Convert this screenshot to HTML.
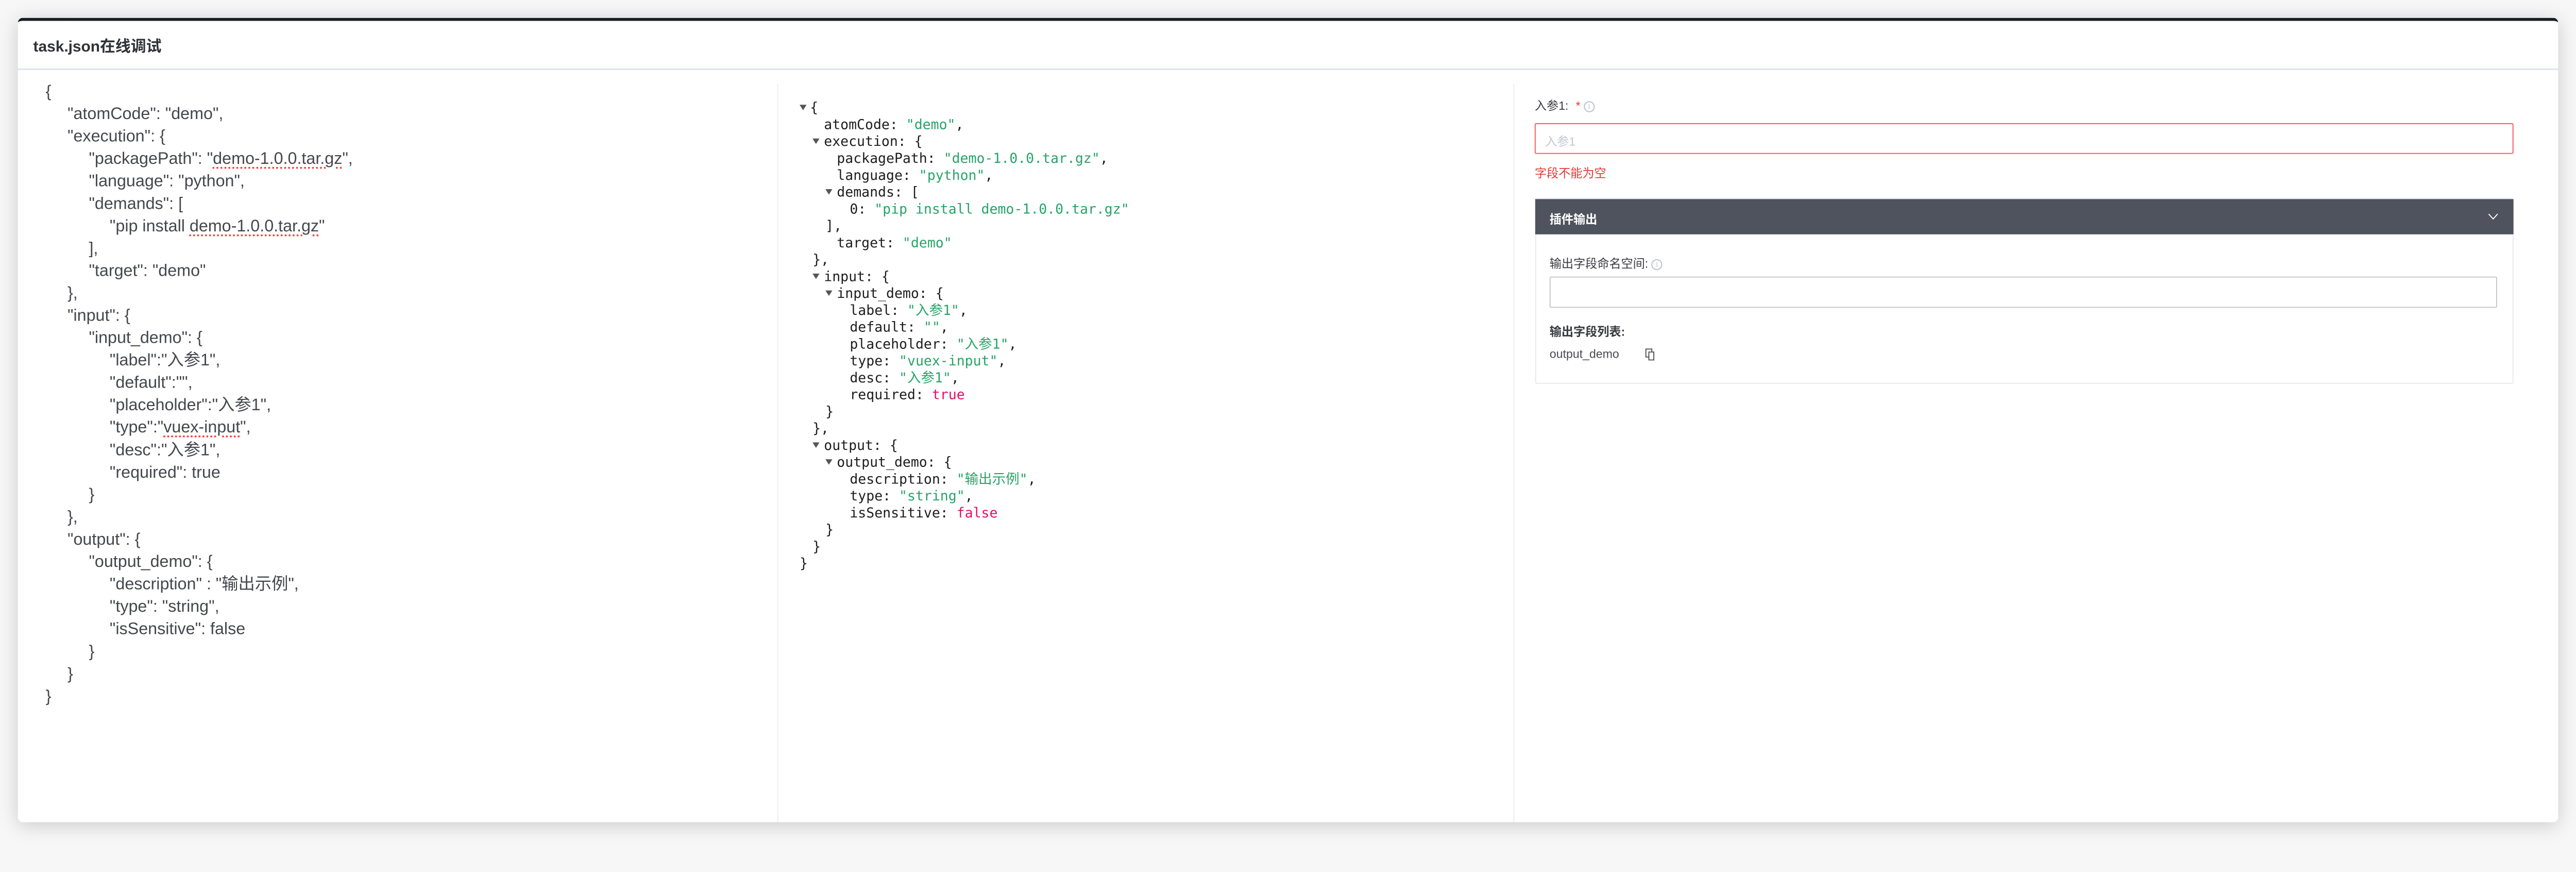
<!DOCTYPE html>
<html><head><meta charset="utf-8">
<style>
*{margin:0;padding:0;box-sizing:border-box}
html,body{width:5190px;height:1692px;overflow:hidden;background:#f7f7f8}
body{position:relative;font-family:"Liberation Sans","Noto Sans CJK SC",sans-serif}
#w{position:absolute;left:0;top:0;width:5190px;height:1692px;transform:scale(0.9634);transform-origin:0 0}
.card{position:absolute;left:36px;top:36px;width:5118px;height:1620px;background:#fff;border-radius:10px;border-top:6px solid #1a1b25;box-shadow:0 6px 40px rgba(0,0,0,.18)}
.hdr{position:absolute;left:0;top:0;width:100%;height:99px;border-bottom:3px solid #dfe2e8}
.hdr span{position:absolute;left:31px;top:26px;font-size:31px;font-weight:bold;color:#313238}
.vl{position:absolute;top:127px;bottom:0;width:2px;background:#eceef2}
.l{position:absolute;font-size:33.5px;color:#45474d;white-space:pre;line-height:45px}
.sq{text-decoration:underline dotted #ff3b3b;text-decoration-thickness:4px;text-underline-offset:6px}
.m{position:absolute;font-family:"DejaVu Sans Mono","Liberation Mono","Noto Sans CJK SC",monospace;font-size:27.5px;line-height:34px;white-space:pre;color:#1e1e1e}
.s{color:#27a468}.b{color:#e3106a}
.t{position:absolute;width:0;height:0;border-left:7px solid transparent;border-right:7px solid transparent;border-top:11px solid #555}
.r{position:absolute;font-size:24px;color:#3a3b40;white-space:nowrap}
.info{display:inline-block;width:22px;height:22px;border:2px solid #b9bfcb;border-radius:50%;color:#b9bfcb;font-size:15px;line-height:18px;text-align:center;vertical-align:middle;font-family:"Liberation Serif",serif}
</style></head><body>
<div id="w">
<div class="card">
<div class="hdr"><span>task.json在线调试</span></div>
<div class="vl" style="left:1530px"></div>
<div class="vl" style="left:3013px"></div>
</div>

<div class="l" style="left:92px;top:162px">{</div>
<div class="l" style="left:136px;top:207px">"atomCode": "demo",</div>
<div class="l" style="left:136px;top:252px">"execution": {</div>
<div class="l" style="left:179px;top:297px">"packagePath": "<span class="sq">demo-1.0.0.tar.gz</span>",</div>
<div class="l" style="left:179px;top:342px">"language": "python",</div>
<div class="l" style="left:179px;top:388px">"demands": [</div>
<div class="l" style="left:221px;top:433px">"pip install <span class="sq">demo-1.0.0.tar.gz</span>"</div>
<div class="l" style="left:179px;top:478px">],</div>
<div class="l" style="left:179px;top:523px">"target": "demo"</div>
<div class="l" style="left:136px;top:568px">},</div>
<div class="l" style="left:136px;top:613px">"input": {</div>
<div class="l" style="left:179px;top:658px">"input_demo": {</div>
<div class="l" style="left:221px;top:703px">"label":"入参1",</div>
<div class="l" style="left:221px;top:748px">"default":"",</div>
<div class="l" style="left:221px;top:793px">"placeholder":"入参1",</div>
<div class="l" style="left:221px;top:838px">"type":"<span class="sq">vuex-input</span>",</div>
<div class="l" style="left:221px;top:884px">"desc":"入参1",</div>
<div class="l" style="left:221px;top:929px">"required": true</div>
<div class="l" style="left:179px;top:974px">}</div>
<div class="l" style="left:136px;top:1019px">},</div>
<div class="l" style="left:136px;top:1064px">"output": {</div>
<div class="l" style="left:179px;top:1109px">"output_demo": {</div>
<div class="l" style="left:221px;top:1154px">"description" : "输出示例",</div>
<div class="l" style="left:221px;top:1199px">"type": "string",</div>
<div class="l" style="left:221px;top:1244px">"isSensitive": false</div>
<div class="l" style="left:179px;top:1290px">}</div>
<div class="l" style="left:136px;top:1335px">}</div>
<div class="l" style="left:92px;top:1380px">}</div>

<div class="t" style="left:1611px;top:211px"></div><div class="m" style="left:1632px;top:200px">{</div>
<div class="m" style="left:1660px;top:234px">atomCode: <span class="s">"demo"</span>,</div>
<div class="t" style="left:1637px;top:279px"></div><div class="m" style="left:1660px;top:268px">execution: {</div>
<div class="m" style="left:1686px;top:302px">packagePath: <span class="s">"demo-1.0.0.tar.gz"</span>,</div>
<div class="m" style="left:1686px;top:336px">language: <span class="s">"python"</span>,</div>
<div class="t" style="left:1663px;top:381px"></div><div class="m" style="left:1686px;top:370px">demands: [</div>
<div class="m" style="left:1712px;top:404px">0: <span class="s">"pip install demo-1.0.0.tar.gz"</span></div>
<div class="m" style="left:1663px;top:438px">],</div>
<div class="m" style="left:1686px;top:472px">target: <span class="s">"demo"</span></div>
<div class="m" style="left:1637px;top:506px">},</div>
<div class="t" style="left:1637px;top:551px"></div><div class="m" style="left:1660px;top:540px">input: {</div>
<div class="t" style="left:1663px;top:585px"></div><div class="m" style="left:1686px;top:574px">input_demo: {</div>
<div class="m" style="left:1712px;top:608px">label: <span class="s">"入参1"</span>,</div>
<div class="m" style="left:1712px;top:642px">default: <span class="s">""</span>,</div>
<div class="m" style="left:1712px;top:676px">placeholder: <span class="s">"入参1"</span>,</div>
<div class="m" style="left:1712px;top:710px">type: <span class="s">"vuex-input"</span>,</div>
<div class="m" style="left:1712px;top:744px">desc: <span class="s">"入参1"</span>,</div>
<div class="m" style="left:1712px;top:778px">required: <span class="b">true</span></div>
<div class="m" style="left:1663px;top:812px">}</div>
<div class="m" style="left:1637px;top:846px">},</div>
<div class="t" style="left:1637px;top:891px"></div><div class="m" style="left:1660px;top:880px">output: {</div>
<div class="t" style="left:1663px;top:925px"></div><div class="m" style="left:1686px;top:914px">output_demo: {</div>
<div class="m" style="left:1712px;top:948px">description: <span class="s">"输出示例"</span>,</div>
<div class="m" style="left:1712px;top:982px">type: <span class="s">"string"</span>,</div>
<div class="m" style="left:1712px;top:1016px">isSensitive: <span class="b">false</span></div>
<div class="m" style="left:1663px;top:1050px">}</div>
<div class="m" style="left:1637px;top:1084px">}</div>
<div class="m" style="left:1611px;top:1118px">}</div>

<div class="r" style="left:3092px;top:193px">入参1: <span style="color:#ea3636;margin-left:8px">*</span> <span class="info">i</span></div>
<div style="position:absolute;left:3092px;top:248px;width:1972px;height:62px;border:2px solid #ff5656;border-radius:3px"></div>
<div class="r" style="left:3113px;top:265px;color:#c4c6cc">入参1</div>
<div class="r" style="left:3092px;top:329px;color:#ea3636">字段不能为空</div>

<div style="position:absolute;left:3093px;top:399px;width:1971px;height:374px;border:2px solid #e6e9ef;border-radius:3px;background:#fff"></div>
<div style="position:absolute;left:3093px;top:401px;width:1971px;height:71px;background:#4f535d"></div>
<div class="r" style="left:3122px;top:422px;color:#fff;font-weight:bold">插件输出</div>
<svg style="position:absolute;left:5012px;top:426px" width="22" height="20" viewBox="0 0 22 20"><path d="M2 5 L11 15 L20 5" fill="none" stroke="#fff" stroke-width="2"/></svg>
<div class="r" style="left:3122px;top:511px">输出字段命名空间: <span class="info">i</span></div>
<div style="position:absolute;left:3122px;top:557px;width:1909px;height:63px;border:2px solid #c4c6cc;border-radius:3px"></div>
<div class="r" style="left:3122px;top:648px;font-weight:bold">输出字段列表:</div>
<div class="r" style="left:3122px;top:700px;color:#4a4b50">output_demo</div>
<svg style="position:absolute;left:3313px;top:700px" width="24" height="28" viewBox="0 0 24 28"><rect x="3" y="3" width="12" height="16" fill="none" stroke="#555" stroke-width="2"/><path d="M9 9 H19 V25 H9 Z" fill="#fff" stroke="#555" stroke-width="2"/></svg>
</div>
</body></html>
